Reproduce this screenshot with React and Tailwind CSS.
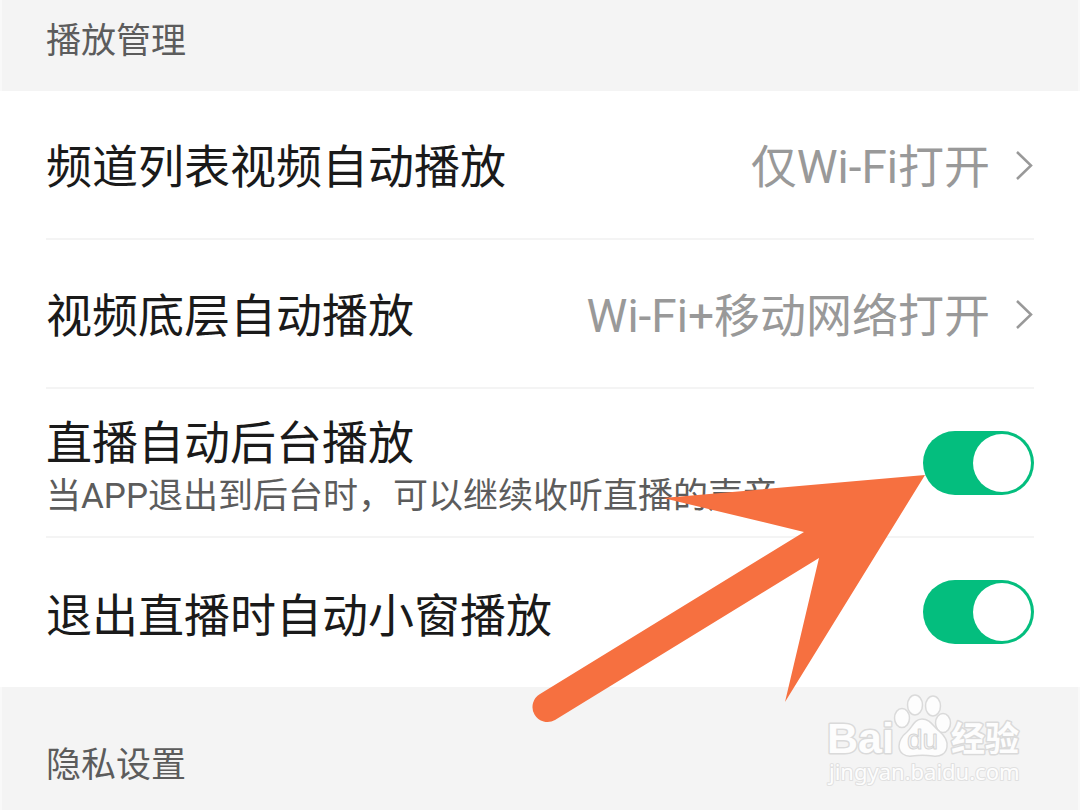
import React, { useState } from 'react';

const SectionTitle = ({ children, className }) => (
  <h2 className={`border-x-2 border-[#f9f9f9] px-11 text-[35px] leading-[52px] text-[#5c5c5c] ${className}`}>{children}</h2>
);

const LinkRow = ({ label, value }) => (
  <li className="mx-[46px] border-b-2 border-[#f4f4f4]">
    <button type="button" className="flex w-full items-center pt-[39px] pb-[37px] text-left">
      <span className="flex-1 pt-1 text-[46px] leading-[67px] text-[#1a1a1a]">{label}</span>
      <span className="mr-6 pt-1 text-[46px] leading-[67px] text-[#999999]">{value}</span>
      <svg className="h-8 w-5 shrink-0" viewBox="0 0 20 32" fill="none" stroke="#999999" strokeWidth="2.5">
        <path d="M3 2 L17 15.5 L3 29" />
      </svg>
    </button>
  </li>
);

const SwitchRow = ({ id, label, hint, last }) => {
  const [on, setOn] = useState(true);

  return (
    <li className={`mx-[46px] flex h-[149px] items-center justify-between border-b-2 ${last ? 'border-white' : 'border-[#f4f4f4]'}`}>
      <label htmlFor={id} className="flex-1 pt-2">
        <span className="block text-[46px] leading-[60px] text-[#1a1a1a]">{label}</span>
        {hint && <span className="block text-[35px] leading-[48px] text-[#5c5c5c]">{hint}</span>}
      </label>
      <input
        id={id}
        type="checkbox"
        role="switch"
        checked={on}
        onChange={() => setOn(!on)}
        className="flex h-16 w-[111px] shrink-0 appearance-none items-center rounded-full bg-[#cccccc] px-[3px] before:size-[58px] before:rounded-full before:bg-white checked:justify-end checked:bg-[#04be7e]"
      />
    </li>
  );
};

const Watermark = () => (
  <svg
    className="absolute right-[50px] bottom-5 h-[100px] w-[210px]"
    viewBox="0 0 210 100"
    fill="#fdfdfd"
    stroke="#dadada"
    strokeWidth="2"
    strokeLinejoin="round"
  >
    <g fontFamily="'Liberation Sans', 'Noto Sans CJK SC', sans-serif" style={{ paintOrder: 'stroke' }}>
      <text x="7" y="63" fontSize="43" fontWeight="bold" strokeWidth="3">Bai</text>
      <text x="131" y="61" fontSize="34" fontWeight="bold" strokeWidth="3">经验</text>
      <text x="9" y="90" fontSize="22" fontFamily="'Noto Sans', sans-serif" stroke="#e0e0e0">jingyan.baidu.com</text>
    </g>
    {/* Paw */}
    <ellipse cx="82" cy="28" rx="7.5" ry="9.5" strokeWidth="1.5" />
    <ellipse cx="95" cy="15" rx="7.5" ry="10" strokeWidth="1.5" />
    <ellipse cx="113" cy="16" rx="7.5" ry="10" strokeWidth="1.5" />
    <ellipse cx="123" cy="33" rx="7.5" ry="9.5" strokeWidth="1.5" />
    <path
      d="M102 29 C110 29 113 36 119 41 C125 46 128 51 127 57 C126 64 120 67 113 66 C106 65 99 65 92 66 C85 67 79 63 79 56 C79 50 82 46 87 42 C92 38 94 29 102 29 Z"
      strokeWidth="1.5"
    />
    <text x="87" y="59" fontSize="28" fontFamily="'Liberation Sans', sans-serif" fill="#f4f4f4" stroke="#d4d4d4" strokeWidth="1">du</text>
  </svg>
);

const PointerArrow = () => (
  <svg
    className="pointer-events-none absolute top-[470px] right-[150px] h-[260px] w-[400px]"
    viewBox="0 0 400 260"
    fill="#f67040"
  >
    <path d="M395 5 L133 28 L274 62 L10 224 A15 15 0 0 0 25 250 L289 88 L255 232 Z" />
  </svg>
);

export default function App() {
  return (
    <div className="relative min-h-screen overflow-hidden bg-[#f4f4f4] font-['Roboto','Noto_Sans_CJK_SC',sans-serif]">
      <SectionTitle className="pt-4 pb-[23px]">播放管理</SectionTitle>
      <ul className="bg-white">
        <LinkRow label="频道列表视频自动播放" value="仅Wi-Fi打开" />
        <LinkRow label="视频底层自动播放" value="Wi-Fi+移动网络打开" />
        <SwitchRow id="live-background" label="直播自动后台播放" hint="当APP退出到后台时，可以继续收听直播的声音" />
        <SwitchRow id="live-window" label="退出直播时自动小窗播放" last />
      </ul>
      <SectionTitle className="pt-[53px] pb-[18px]">隐私设置</SectionTitle>
      <Watermark />
      <PointerArrow />
    </div>
  );
}
